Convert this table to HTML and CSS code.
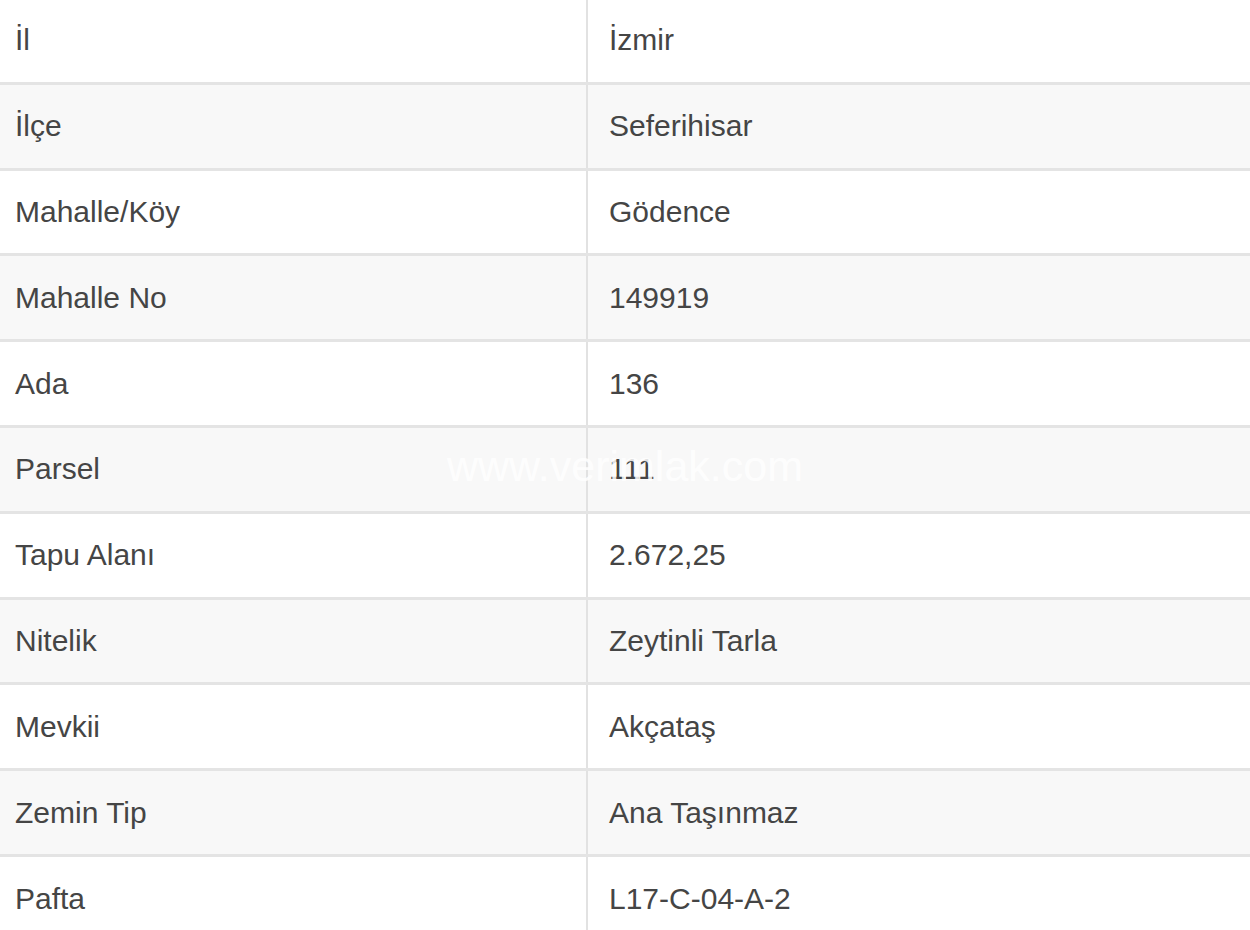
FILE: index.html
```html
<!DOCTYPE html>
<html lang="tr">
<head>
<meta charset="utf-8">
<title>Tapu Bilgileri</title>
<link rel="stylesheet" href="styles.css">
</head>
<body>
<div class="wrap">
  <table class="info">
    <tbody>
      <tr><td class="k">İl</td><td class="v">İzmir</td></tr>
      <tr><td class="k">İlçe</td><td class="v">Seferihisar</td></tr>
      <tr><td class="k">Mahalle/Köy</td><td class="v">Gödence</td></tr>
      <tr><td class="k">Mahalle No</td><td class="v">149919</td></tr>
      <tr><td class="k">Ada</td><td class="v">136</td></tr>
      <tr><td class="k">Parsel</td><td class="v">111</td></tr>
      <tr><td class="k">Tapu Alanı</td><td class="v">2.672,25</td></tr>
      <tr><td class="k">Nitelik</td><td class="v">Zeytinli Tarla</td></tr>
      <tr><td class="k">Mevkii</td><td class="v">Akçataş</td></tr>
      <tr><td class="k">Zemin Tip</td><td class="v">Ana Taşınmaz</td></tr>
      <tr><td class="k">Pafta</td><td class="v">L17-C-04-A-2</td></tr>
    </tbody>
  </table>
  <div class="watermark">www.verimlak.com</div>
</div>
</body>
</html>
```

FILE: styles.css
```css
html, body {
  margin: 0;
  padding: 0;
  background: #ffffff;
  overflow: hidden;
}

.wrap {
  position: relative;
  width: 1250px;
  margin-top: -4px;
}

.info {
  width: 1250px;
  border-collapse: collapse;
  table-layout: fixed;
  font-family: "Liberation Sans", Arial, sans-serif;
  font-size: 30px;
  color: #454545;
}

.info tr {
  height: 85.8px;
  border-top: 3px solid #e4e4e4;
}

.info tr:nth-child(even) {
  background: #f8f8f8;
}

.info td {
  padding: 0;
  vertical-align: middle;
  white-space: nowrap;
}

.info .k {
  width: 587px;
  padding-left: 15px;
  box-sizing: border-box;
}

.info .v {
  padding-left: 21px;
  border-left: 2px solid #e2e2e2;
}

.watermark {
  position: absolute;
  left: 447px;
  top: 444px;
  font-family: "Liberation Sans", Arial, sans-serif;
  font-size: 43px;
  line-height: 52px;
  color: rgba(255, 255, 255, 0.85);
  white-space: nowrap;
  pointer-events: none;
}
```
